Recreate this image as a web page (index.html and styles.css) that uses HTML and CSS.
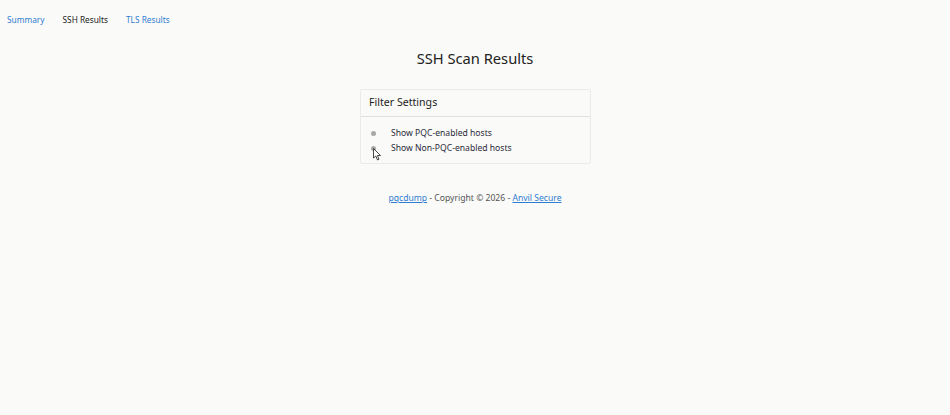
FILE: index.html
```html
<!DOCTYPE html>
<html>
<head>
<meta charset="utf-8">
<link rel="stylesheet" href="styles.css">
</head>
<body>
<nav class="nav">
  <a class="nav-link" href="#">Summary</a>
  <span class="nav-link active">SSH Results</span>
  <a class="nav-link" href="#">TLS Results</a>
</nav>
<main class="main">
  <h1 class="title">SSH Scan Results</h1>
  <section class="card">
    <div class="card-header">Filter Settings</div>
    <div class="card-body">
      <label class="opt"><span class="radio"></span><span class="opt-label">Show PQC-enabled hosts</span></label>
      <label class="opt"><span class="radio"></span><span class="opt-label">Show Non-PQC-enabled hosts</span>
        <svg class="cursor" width="9" height="13" viewBox="0 0 9 13"><path d="M0.5 0.5 L0.5 10 L2.8 8 L4.5 12 L6 11.3 L4.4 7.5 L7.5 7.5 Z" fill="#fff" stroke="#333" stroke-width="0.9"/></svg>
      </label>
    </div>
  </section>
  <footer class="footer"><a href="#">pqcdump</a> - Copyright © 2026 - <a href="#">Anvil Secure</a></footer>
</main>
</body>
</html>
```
FILE: styles.css
```css
html, body { margin: 0; padding: 0; }
body {
  background: #fafaf8;
  font-family: "Noto Sans", "Open Sans", sans-serif;
  color: #222;
  width: 950px;
  height: 415px;
  overflow: hidden;
}
.nav {
  display: flex;
  padding: 11px 0 0 7px;
  height: 16px;
  align-items: center;
}
.nav-link {
  font-size: 8.3px;
  color: #2f7dd1;
  text-decoration: none;
  margin-right: 18px;
}
.nav-link.active { color: #222; }
.main {
  display: flex;
  flex-direction: column;
  align-items: center;
}
.title {
  font-weight: 400;
  font-size: 14.7px;
  margin: 21px 0 0 0;
  line-height: 20px;
  color: #222;
}
.card {
  width: 229px;
  margin-top: 21px;
  margin-left: 1px;
  border: 1px solid #ebebe9;
  border-radius: 2px;
}
.card-header {
  font-size: 10.6px;
  padding: 4px 8px 0;
  height: 22px;
  line-height: 16px;
  border-bottom: 1px solid #e0e0df;
}
.card-body {
  padding: 9px 0 7px 9px;
  display: flex;
  flex-direction: column;
}
.opt {
  display: flex;
  align-items: center;
  height: 15px;
  line-height: 15px;
  position: relative;
}
.radio {
  width: 5px;
  height: 5px;
  border-radius: 50%;
  background: #a8a8a8;
  margin-right: 15px;
  margin-left: 1px;
}
.opt-label {
  font-size: 8.6px;
  color: #2a2a3a;
}
.cursor {
  position: absolute;
  left: 3px;
  top: 7px;
}
.footer {
  margin-top: 28px;
  font-size: 8.6px;
  color: #555;
}
.footer a { color: #2f7dd1; }
```
